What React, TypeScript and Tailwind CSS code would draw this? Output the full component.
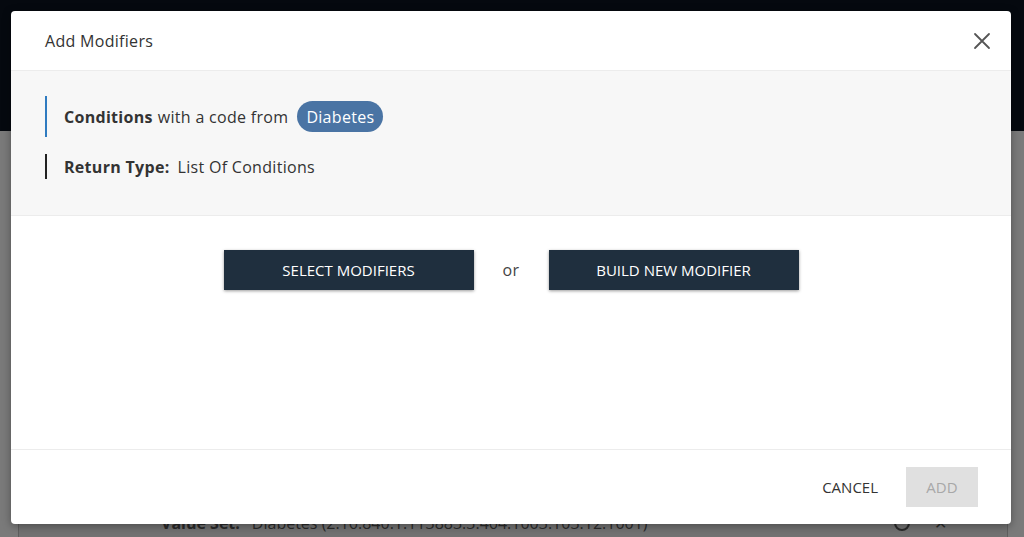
import React from "react";

export default function App() {
  return (
    <div
      className="relative w-[1024px] h-[537px] overflow-hidden bg-[#7a7a7a]"
      style={{ fontFamily: '"Open Sans", "Liberation Sans", sans-serif' }}
    >
      {/* underlying page (dimmed) */}
      <div className="h-[131px] bg-[#05090f]" />
      <div className="ml-[18px] mr-[16px] h-[406px] border-l border-r border-[#5e5e5e] bg-[#727272] flex flex-col justify-end">
        <div className="flex items-center h-[28px] pl-[142px] pr-[60px] text-[16px] text-[#2a2a2a]">
          <span className="font-bold">Value Set:</span>
          <span className="ml-3">Diabetes (2.16.840.1.113883.3.464.1003.103.12.1001)</span>
          <span className="ml-auto w-[16px] h-[16px] rounded-full border-2 border-[#2a2a2a]" />
          <span className="ml-[24px] text-[#2a2a2a]">✕</span>
        </div>
      </div>

      {/* modal */}
      <div className="absolute left-[11px] top-[11px] w-[1000px] h-[513px] bg-white rounded-[4px] shadow-[0_2px_8px_rgba(0,0,0,0.35)] flex flex-col overflow-hidden tracking-[0.3px]">
        <div className="h-[60px] flex items-center justify-between pl-[34px] pr-[20px] border-b border-[#ececec] shrink-0">
          <span className="text-[16px] text-[#333] mt-[1px]">Add Modifiers</span>
          <svg width="18" height="18" viewBox="0 0 18 18">
            <path d="M2 2 L16 16 M16 2 L2 16" stroke="#555" strokeWidth="1.8" strokeLinecap="round" />
          </svg>
        </div>
        <div className="h-[145px] bg-[#f7f7f7] border-b border-[#ececec] pl-[34px] pt-[25px] shrink-0 text-[16px] text-[#333]">
          <div className="flex items-center h-[41px] border-l-2 border-[#2f7bc0] pl-[17px]">
            <span className="font-bold">Conditions</span>
            <span className="ml-[5px]">with a code from</span>
            <span className="ml-[9px] bg-[#4a74a4] text-white rounded-full h-[31px] px-[9px] flex items-center">Diabetes</span>
          </div>
          <div className="flex items-center h-[25px] mt-[17px] border-l-2 border-[#222] pl-[17px]">
            <span className="font-bold">Return Type:</span>
            <span className="ml-[8px]">List Of Conditions</span>
          </div>
        </div>
        <div className="flex-1 border-b border-[#ececec]">
          <div className="flex items-center justify-center mt-[34px]">
            <button className="w-[250px] h-[40px] bg-[#1f2f3e] text-white text-[15px] tracking-[0px] shadow-[0_1px_3px_rgba(0,0,0,0.4)]">
              SELECT MODIFIERS
            </button>
            <span className="w-[75px] text-center text-[16px] text-[#444]">or</span>
            <button className="w-[250px] h-[40px] bg-[#1f2f3e] text-white text-[15px] tracking-[0px] shadow-[0_1px_3px_rgba(0,0,0,0.4)]">
              BUILD NEW MODIFIER
            </button>
          </div>
        </div>
        <div className="h-[74px] shrink-0 flex items-center justify-end pr-[33px] gap-[28px]">
          <span className="text-[15px] text-[#333] tracking-[0px]">CANCEL</span>
          <button className="w-[72px] h-[40px] bg-[#e0e0e0] text-[#a8a8a8] text-[15px] tracking-[0px]">ADD</button>
        </div>
      </div>
    </div>
  );
}
